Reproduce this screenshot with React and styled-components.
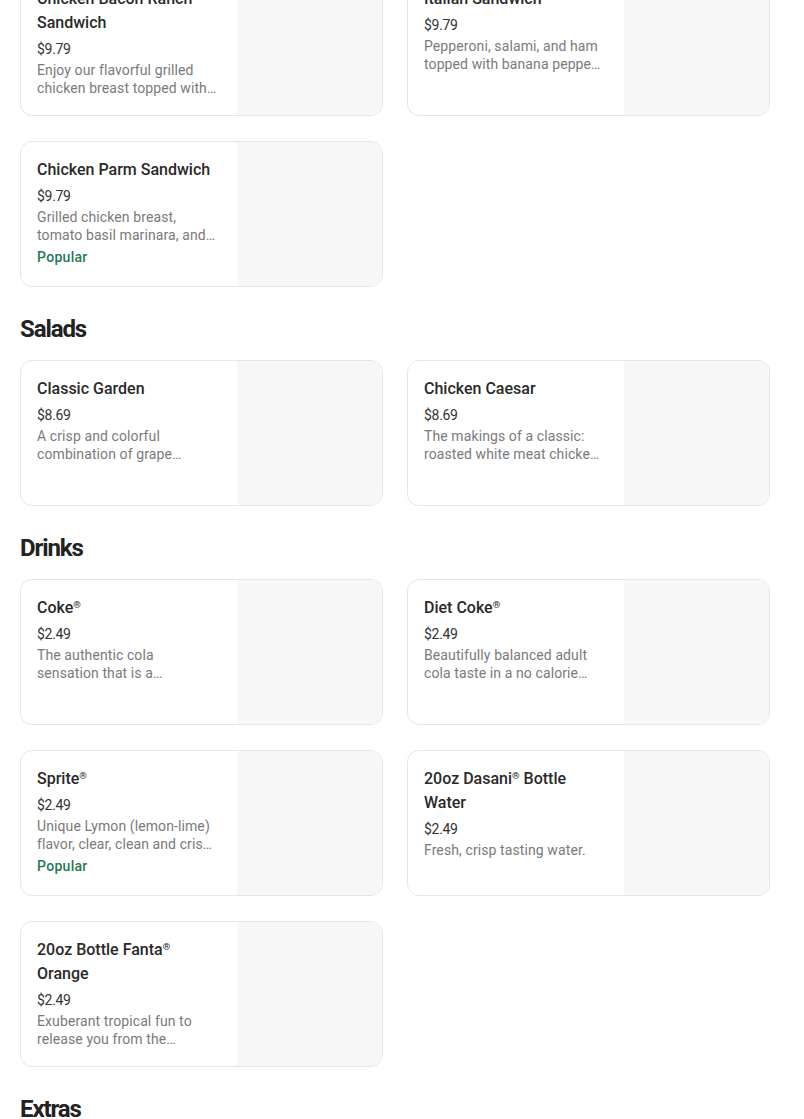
import React from 'react'
import styled, { createGlobalStyle } from 'styled-components'

const GlobalStyle = createGlobalStyle`
    body {
        margin: 0;
        background: #ffffff;
        font-family: Roboto, "Noto Sans", "Liberation Sans", sans-serif;
        color: #262626;
        overflow: hidden;
    }
`

const Page = styled.div`
    width: 750px;
    padding: 0 0 0 20px;
    margin-top: -30px;
`

const SectionTitle = styled.h2`
    margin: 26px 0 15px;
    font-size: 24px;
    line-height: 32px;
    font-weight: 700;
    letter-spacing: -1.1px;
    color: #222222;
`

const Grid = styled.div`
    display: grid;
    grid-template-columns: 1fr 1fr;
    gap: 25px 24px;
`

const Card = styled.div`
    display: flex;
    min-height: 144px;
    border: 1px solid #e6e6e6;
    border-radius: 12px;
    overflow: hidden;
    background: #ffffff;
`

const Info = styled.div`
    flex: 1;
    min-width: 0;
    padding: 16px 19px 16px 16px;
    display: flex;
    flex-direction: column;
`

const Name = styled.div`
    font-size: 16px;
    line-height: 24px;
    font-weight: 500;
    color: #292929;
    margin-bottom: 4px;
`

const Reg = styled.span`
    font-size: 0.6em;
    vertical-align: 0.5em;
    line-height: 0;
    color: #292929;
`

const Price = styled.div`
    font-size: 14px;
    line-height: 20px;
    color: #333333;
    margin-bottom: 2px;
    letter-spacing: -0.3px;
`

const Desc = styled.div`
    font-size: 14px;
    line-height: 18px;
    color: #7a7a7a;
    letter-spacing: 0.1px;
    display: -webkit-box;
    -webkit-line-clamp: 2;
    -webkit-box-orient: vertical;
    overflow: hidden;
`

const Badge = styled.div`
    margin-top: 3px;
    font-size: 14px;
    line-height: 20px;
    font-weight: 500;
    letter-spacing: 0.3px;
    color: #1f7a55;
`

const Thumb = styled.div`
    width: 145px;
    flex-shrink: 0;
    background: #f7f7f7;
`

const sections = [
    {
        title: null,
        items: [
            { name: 'Chicken Bacon Ranch Sandwich', price: '$9.79', desc: 'Enjoy our flavorful grilled chicken breast topped with smoked bacon and ranch.' },
            { name: 'Italian Sandwich', price: '$9.79', desc: 'Pepperoni, salami, and ham topped with banana peppers and provolone.' },
            { name: 'Chicken Parm Sandwich', price: '$9.79', desc: 'Grilled chicken breast, tomato basil marinara, and melted mozzarella.', popular: true },
        ],
    },
    {
        title: 'Salads',
        items: [
            { name: 'Classic Garden', price: '$8.69', desc: 'A crisp and colorful combination of grape tomatoes, red onion and carrots.' },
            { name: 'Chicken Caesar', price: '$8.69', desc: 'The makings of a classic: roasted white meat chicken, romaine and parmesan.' },
        ],
    },
    {
        title: 'Drinks',
        items: [
            { name: 'Coke®', price: '$2.49', desc: 'The authentic cola sensation that is a refreshing part of sharing life.' },
            { name: 'Diet Coke®', price: '$2.49', desc: 'Beautifully balanced adult cola taste in a no calorie beverage.' },
            { name: 'Sprite®', price: '$2.49', desc: 'Unique Lymon (lemon-lime) flavor, clear, clean and crisp with no caffeine.', popular: true },
            { name: '20oz Dasani® Bottle Water', price: '$2.49', desc: 'Fresh, crisp tasting water.' },
            { name: '20oz Bottle Fanta® Orange', price: '$2.49', desc: 'Exuberant tropical fun to release you from the ordinary.' },
        ],
    },
    { title: 'Extras', items: [] },
]

const renderName = name => {
    const parts = name.split('®')
    return parts.map((p, i) => (
        <React.Fragment key={i}>
            {p}
            {i < parts.length - 1 && <Reg>®</Reg>}
        </React.Fragment>
    ))
}

const App = () => {
    return (
        <Page>
            <GlobalStyle />
            {sections.map((section, si) => (
                <section key={si}>
                    {section.title && <SectionTitle>{section.title}</SectionTitle>}
                    {section.items.length > 0 && (
                        <Grid>
                            {section.items.map(item => (
                                <Card key={item.name}>
                                    <Info>
                                        <Name>{renderName(item.name)}</Name>
                                        <Price>{item.price}</Price>
                                        <Desc>{item.desc}</Desc>
                                        {item.popular && <Badge>Popular</Badge>}
                                    </Info>
                                    <Thumb />
                                </Card>
                            ))}
                        </Grid>
                    )}
                </section>
            ))}
        </Page>
    )
}

export default App
